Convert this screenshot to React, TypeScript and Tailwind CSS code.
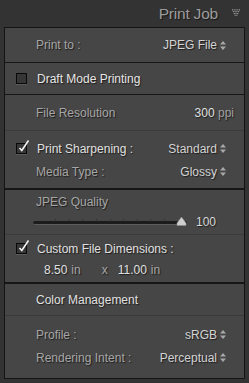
import React from "react";

const sh = "[text-shadow:1px_1px_1px_rgba(0,0,0,0.6)]";

function UpDown() {
  return (
    <svg width="6" height="9" viewBox="0 0 6 9" className="ml-[3px] inline-block">
      <path d="M3 0 L6 3.5 L0 3.5 Z" fill="#a8a8a8" />
      <path d="M0 5.5 L6 5.5 L3 9 Z" fill="#a8a8a8" />
    </svg>
  );
}

function Check({ checked }: { checked: boolean }) {
  return (
    <div className="relative w-[11px] h-[11px] bg-[#363636] border border-[#0a0a0a] shadow-[0_1px_0_#5a5a5a]">
      {checked && (
        <svg width="14" height="14" viewBox="0 0 14 14" className="absolute left-[0px] top-[-5px]">
          <path d="M2.5 9 L4.8 11.5 L11.5 1.5" stroke="#f2f2f2" strokeWidth="1.6" fill="none" />
        </svg>
      )}
    </div>
  );
}

function Row({ label, value, h = "h-[22px]" }: { label: string; value: string; h?: string }) {
  return (
    <div className={`flex items-center justify-between pl-[31px] pr-[18px] ${h}`}>
      <span className={`text-[#a6a6a6] ${sh}`}>{label}</span>
      <span className={`flex items-center text-[#d4d4d4] ${sh}`}>
        {value}
        <UpDown />
      </span>
    </div>
  );
}

export default function App() {
  const ticks = [0, 1, 2, 3, 4, 5, 6, 7, 8];
  return (
    <div
      className="w-[249px] h-[383px] bg-[#333333] flex flex-col text-[12px] overflow-hidden"
      style={{ fontFamily: '"Liberation Sans", Arial, sans-serif' }}
    >
      <div className="h-[27px] flex items-center justify-end pr-[9px] gap-[14px]">
        <span className={`text-[15.5px] tracking-[-0.2px] text-[#9c9c9c] ${sh}`}>Print Job</span>
        <svg width="8" height="8" viewBox="0 0 9 8" className="mt-[-2px]">
          {[
            [0, 0], [2, 0], [4, 0], [6, 0], [8, 0],
            [1, 2], [3, 2], [5, 2], [7, 2],
            [2, 4], [4, 4], [6, 4],
            [3, 6], [5, 6],
          ].map(([x, y], i) => (
            <rect key={i} x={x} y={y} width="1" height="1" fill="#d0d0d0" />
          ))}
        </svg>
      </div>
      <div className="mx-[4px] border border-[#141414] bg-[#464646] flex flex-col flex-none h-[352px]">
        <div className="h-[35px] flex flex-col justify-center border-b border-[#161616]">
          <Row label="Print to :" value="JPEG File" />
        </div>
        <div className="h-[32px] flex items-center pl-[11px] gap-[10px] border-b border-[#161616]">
          <Check checked={false} />
          <span className={`text-[#e6e6e6] ${sh}`}>Draft Mode Printing</span>
        </div>
        <div className="h-[36px] flex items-center justify-between pl-[31px] pr-[10px] border-b border-[#3a3a3a]">
          <span className={`text-[#a6a6a6] ${sh}`}>File Resolution</span>
          <span className={sh}>
            <span className="text-[#e0e0e0]">300</span>
            <span className="text-[#a0a0a0]"> ppi</span>
          </span>
        </div>
        <div className="h-[59px] flex flex-col justify-center border-b-2 border-[#161616]">
          <div className="h-[24px] flex items-center justify-between pl-[11px] pr-[18px]">
            <div className="flex items-center gap-[10px]">
              <Check checked={true} />
              <span className={`text-[#e0e0e0] ${sh}`}>Print Sharpening :</span>
            </div>
            <span className={`flex items-center text-[#d4d4d4] ${sh}`}>
              Standard
              <UpDown />
            </span>
          </div>
          <Row label="Media Type :" value="Glossy" />
        </div>
        <div className="h-[45px] flex flex-col justify-center border-b border-[#3a3a3a] pl-[31px]">
          <span className={`text-[#a6a6a6] ${sh}`}>JPEG Quality</span>
          <div className="flex items-center mt-[2px]">
            <div className="relative w-[154px] h-[12px] -ml-[3px]">
              <div className="absolute left-0 right-0 top-[3px] flex justify-between px-[22px]">
                {ticks.map((t) => (
                  <div key={t} className="w-[1px] h-[1px] bg-[#2a2a2a]" />
                ))}
              </div>
              <div className="absolute left-0 right-0 top-[5px] h-[4px] rounded-full bg-[#1c1c1c] border-b border-[#5c5c5c]" />
              <svg width="11" height="9" viewBox="0 0 11 9" className="absolute right-[0px] top-[1px]">
                <path d="M5.5 0 L8.5 4 L10 6 L10 8.5 L1 8.5 L1 6 L2.5 4 Z" fill="#cfcfcf" stroke="#8a8a8a" strokeWidth="0.6" />
              </svg>
            </div>
            <span className={`ml-[9px] text-[#d8d8d8] ${sh}`}>100</span>
          </div>
        </div>
        <div className="h-[49px] flex flex-col justify-center border-b-2 border-[#161616]">
          <div className="flex items-center pl-[11px] gap-[10px] h-[22px]">
            <Check checked={true} />
            <span className={`text-[#e0e0e0] ${sh}`}>Custom File Dimensions :</span>
          </div>
          <div className={`flex items-center h-[20px] pl-[39px] ${sh}`}>
            <span className="text-[#e0e0e0]">8.50</span>
            <span className="text-[#a6a6a6] ml-[4px]">in</span>
            <span className="text-[#a6a6a6] ml-[21px]">x</span>
            <span className="text-[#e0e0e0] ml-[10px]">11.00</span>
            <span className="text-[#a6a6a6] ml-[4px]">in</span>
          </div>
        </div>
        <div className="h-[32px] flex items-center pl-[31px] border-b border-[#3a3a3a]">
          <span className={`text-[#e0e0e0] ${sh}`}>Color Management</span>
        </div>
        <div className="flex-1 flex flex-col justify-center pb-[2px]">
          <Row label="Profile :" value="sRGB" h="h-[23px]" />
          <Row label="Rendering Intent :" value="Perceptual" h="h-[23px]" />
        </div>
      </div>
    </div>
  );
}
